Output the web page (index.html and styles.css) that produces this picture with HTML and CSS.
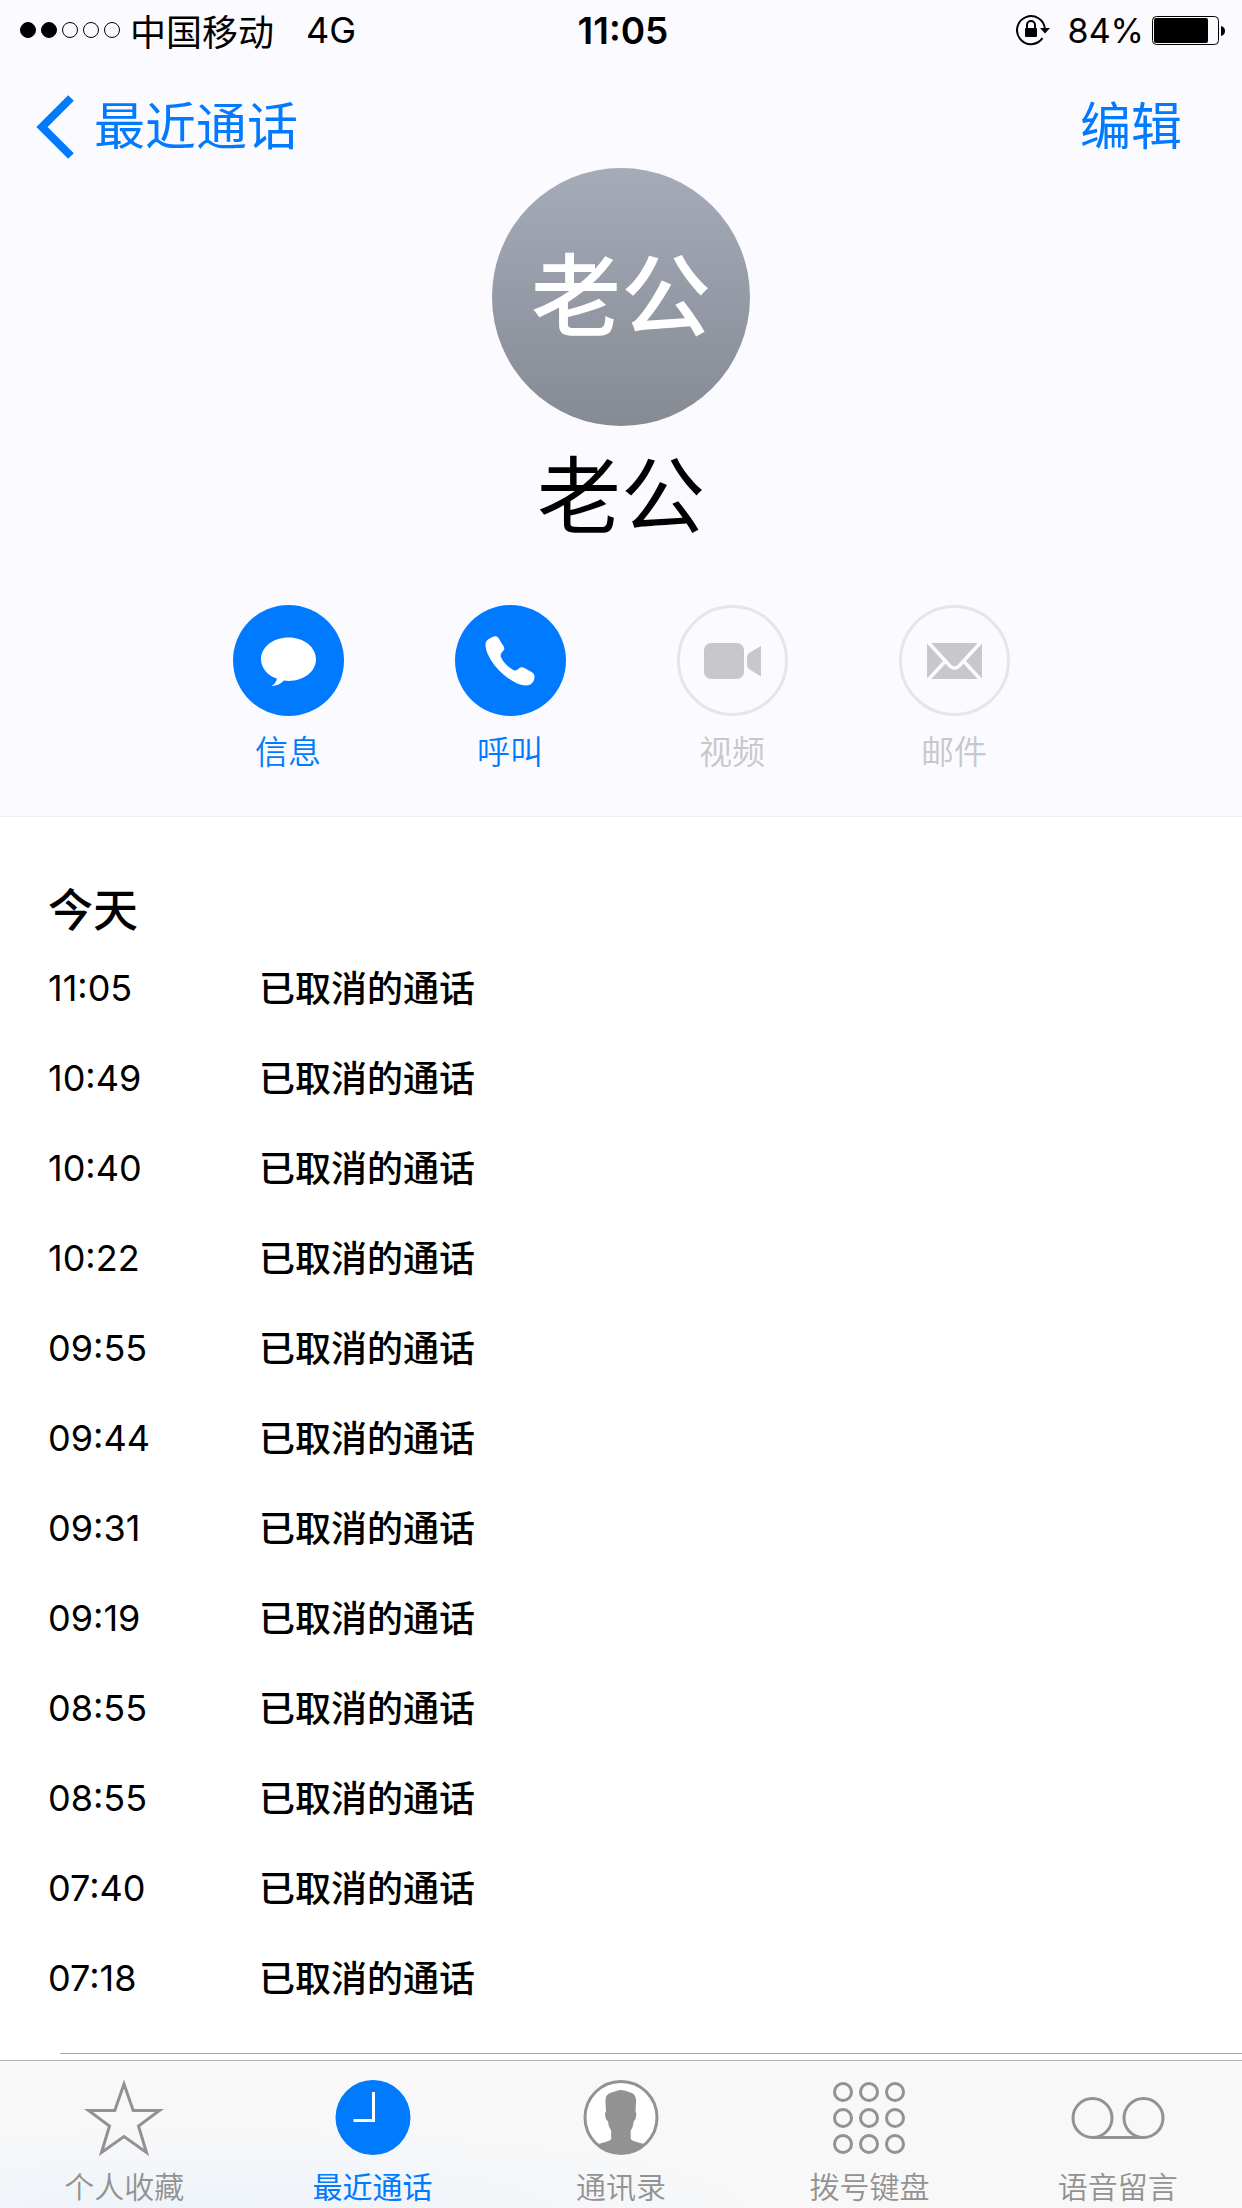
FILE: index.html
```html
<!doctype html>
<html lang="zh-CN">
    <head>
        <meta charset="UTF-8" />
        <meta name="viewport" content="width=device-width, initial-scale=1.0" />
        <title>最近通话</title>
        <link rel="stylesheet" href="styles.css">
    </head>
    <body>
        <header class="header">
            <div class="status-bar">
                <div class="status-left">
                    <div class="signal">
                        <span class="dot full"></span>
                        <span class="dot full"></span>
                        <span class="dot"></span>
                        <span class="dot"></span>
                        <span class="dot"></span>
                    </div>
                    <span>中国移动</span>
                    <span class="network">4G</span>
                </div>
                <div class="status-time">11:05</div>
                <div class="status-right">
                    <svg class="lock" width="34" height="32" viewBox="0 0 34 32">
                        <path d="M26.500 24.200A14 14 0 1 1 29 15" fill="none" stroke="#000" stroke-width="2" />
                        <path d="M24 14h10l-5 5.500z" />
                        <rect x="9" y="14" width="12" height="9" rx="1" />
                        <path d="M11 14v-3a4 4 0 0 1 8 0v3" fill="none" stroke="#000" stroke-width="2" />
                    </svg>
                    <span class="percent">84%</span>
                    <svg class="battery" width="74" height="29" viewBox="0 0 74 29">
                        <rect x="0.500" y="0.500" width="66" height="28" rx="4" fill="none" stroke="#000" />
                        <rect x="2" y="2" width="54" height="25" rx="2" />
                        <path d="M69 10q4 1 4 5t-4 5z" />
                    </svg>
                </div>
            </div>

            <nav class="nav-bar">
                <a class="back" href="#">
                    <svg width="40" height="64" viewBox="0 0 40 64">
                        <path d="M35 3L6 32L35 61" fill="none" stroke="#007aff" stroke-width="8" />
                    </svg>
                    <span>最近通话</span>
                </a>
                <button class="edit" type="button">编辑</button>
            </nav>

            <div class="avatar">老公</div>
            <h1>老公</h1>

            <div class="actions">
                <button class="action" type="button">
                    <svg width="111" height="111" viewBox="0 0 111 111">
                        <circle cx="55.500" cy="55.500" r="55.500" fill="#007aff" />
                        <path d="M55.500 32.500c15.500 0 27.500 9.700 27.500 21.800S71 76 55.500 76q-2.200 0-4.500-.4c-3.500 3.600-7.500 5.600-12.500 5.400 3-1.500 5-4.200 5.300-7.400C34.500 70.500 28 63 28 54.300c0-12.100 12-21.800 27.500-21.800z" fill="#fff" />
                    </svg>
                    <span>信息</span>
                </button>
                <button class="action" type="button">
                    <svg width="111" height="111" viewBox="0 0 111 111">
                        <circle cx="55.500" cy="55.500" r="55.500" fill="#007aff" />
                        <path d="M37 32.200c2.500-1.500 5-1.500 6.500.8l5.200 8.500c1 1.800.8 3-.6 4.500-2.200 2.300-3 4.300-2 6.500 2.500 5.200 7.500 10 12.200 12.600 1.600.8 3 .3 4.600-.9 2.500-2 4.300-2.500 6.600-1.200l7 4c2.300 1.400 3.200 3 3 5.500-.4 4.500-3.500 8-8.500 8-16 0-41-25.500-40.500-41.500.1-3.200 3-5 6.500-6.800z" fill="#fff" />
                    </svg>
                    <span>呼叫</span>
                </button>
                <button class="action" type="button" disabled>
                    <svg width="111" height="111" viewBox="0 0 111 111">
                        <circle cx="55.500" cy="55.500" r="54" fill="none" stroke="#e5e5ea" stroke-width="3" />
                        <rect x="27" y="38" width="40" height="36" rx="7" fill="#c7c7cc" />
                        <path d="M84 41v30.500L72 64q-2-1.500-2-4v-8q0-2.500 2-4z" fill="#c7c7cc" />
                    </svg>
                    <span>视频</span>
                </button>
                <button class="action" type="button" disabled>
                    <svg width="111" height="111" viewBox="0 0 111 111">
                        <circle cx="55.500" cy="55.500" r="54" fill="none" stroke="#e5e5ea" stroke-width="3" />
                        <rect x="28" y="38" width="55" height="36" fill="#c7c7cc" />
                        <path d="M28 36L51 61q4.500 4.500 9 0L83 36M28 76L46.500 56M83 76L64.500 56" fill="none" stroke="#fbfaff" stroke-width="3.500" />
                    </svg>
                    <span>邮件</span>
                </button>
            </div>
        </header>

        <main class="history">
            <h2>今天</h2>
            <table class="calls">
                <tbody>
                    <tr><td class="time">11:05</td><td class="type">已取消的通话</td></tr>
                    <tr><td class="time">10:49</td><td class="type">已取消的通话</td></tr>
                    <tr><td class="time">10:40</td><td class="type">已取消的通话</td></tr>
                    <tr><td class="time">10:22</td><td class="type">已取消的通话</td></tr>
                    <tr><td class="time">09:55</td><td class="type">已取消的通话</td></tr>
                    <tr><td class="time">09:44</td><td class="type">已取消的通话</td></tr>
                    <tr><td class="time">09:31</td><td class="type">已取消的通话</td></tr>
                    <tr><td class="time">09:19</td><td class="type">已取消的通话</td></tr>
                    <tr><td class="time">08:55</td><td class="type">已取消的通话</td></tr>
                    <tr><td class="time">08:55</td><td class="type">已取消的通话</td></tr>
                    <tr><td class="time">07:40</td><td class="type">已取消的通话</td></tr>
                    <tr><td class="time">07:18</td><td class="type">已取消的通话</td></tr>
                </tbody>
            </table>
            <hr class="separator">
        </main>

        <nav class="tab-bar">
            <a class="tab" href="#">
                <svg width="80" height="78" viewBox="0 0 80 78">
                    <path d="M40 5L49.200 31.500H75.500L54.500 47L62.500 73.500L40 57.500L17.500 73.500L25.500 47L4.500 31.500H30.800Z" fill="none" stroke="#929292" stroke-width="3" />
                </svg>
                <span>个人收藏</span>
            </a>
            <a class="tab active" href="#">
                <svg width="80" height="78" viewBox="0 0 80 78">
                    <circle cx="40" cy="38.500" r="37.500" fill="#007aff" />
                    <path d="M40.500 13V41.500H20.500" fill="none" stroke="#fff" stroke-width="3" />
                </svg>
                <span>最近通话</span>
            </a>
            <a class="tab" href="#">
                <svg width="80" height="78" viewBox="0 0 80 78">
                    <circle cx="40" cy="38.500" r="36" fill="#fff" stroke="#929292" stroke-width="3" />
                    <path d="M40.500 11c4 .2 5.500 1.800 9 2.500 4.500 1.500 6 5 5.500 10l-.5 9.500c1.200.5.900 2.200.5 4.500-.4 2.500-1 4-2.300 4.800-.4 4-1.200 6.700-3 9.200v8.500c1.500 2.500 9 3.500 15 5.500a37.500 37.500 0 0 1-49 0c6-2 13-3 14.500-5.500v-8.500c-1.800-2.500-2.800-5.200-3.200-9.200-1.500-.8-2.200-2.300-2.600-4.800-.4-2.300-.6-4 .6-4.500l-.5-9.500c-.3-6 1.500-8.500 6-10 3.500-.8 6-2.500 10-2.500z" fill="#929292" />
                </svg>
                <span>通讯录</span>
            </a>
            <a class="tab" href="#">
                <svg width="80" height="78" viewBox="0 0 80 78">
                    <g fill="none" stroke="#929292" stroke-width="3">
                        <circle cx="14" cy="13" r="8.500" />
                        <circle cx="40" cy="13" r="8.500" />
                        <circle cx="66" cy="13" r="8.500" />
                        <circle cx="14" cy="39" r="8.500" />
                        <circle cx="40" cy="39" r="8.500" />
                        <circle cx="66" cy="39" r="8.500" />
                        <circle cx="14" cy="65" r="8.500" />
                        <circle cx="40" cy="65" r="8.500" />
                        <circle cx="66" cy="65" r="8.500" />
                    </g>
                </svg>
                <span>拨号键盘</span>
            </a>
            <a class="tab" href="#">
                <svg width="96" height="78" viewBox="0 0 96 78">
                    <g fill="none" stroke="#929292" stroke-width="3">
                        <circle cx="22.500" cy="39" r="19.500" />
                        <circle cx="73.500" cy="39" r="19.500" />
                        <path d="M22.500 58.500H73.500" />
                    </g>
                </svg>
                <span>语音留言</span>
            </a>
        </nav>
    </body>
</html>
```

FILE: styles.css
```css
* {
    margin: 0;
    padding: 0;
    box-sizing: border-box;
}

body {
    display: flex;
    flex-direction: column;
    min-height: 100vh;
    font-family: Inter, "Noto Sans CJK SC", sans-serif;
    font-size: 36px;
    color: #000;
    background: #fff;
}

a {
    color: inherit;
    text-decoration: none;
}

button {
    font: inherit;
    color: inherit;
    background: none;
    border: none;
    cursor: pointer;
}

svg {
    display: block;
}

.header {
    background: #fbfaff;
    border-bottom: 1px solid #efeff2;
    padding-bottom: 44px;
}

/* Status bar */
.status-bar {
    display: grid;
    grid-template-columns: 1fr auto 1fr;
    align-items: center;
    height: 60px;
    padding: 0 16px 0 20px;
}

.status-left,
.status-right {
    display: flex;
    align-items: center;
}

.status-right {
    justify-content: flex-end;
}

.signal {
    display: flex;
    gap: 5px;
    margin-right: 10px;
}

.dot {
    width: 16px;
    height: 16px;
    border: 1px solid #000;
    border-radius: 50%;
}

.dot.full {
    background: #000;
}

.network {
    margin-left: 32px;
}

.status-time {
    font-size: 37px;
    font-weight: 600;
}

.percent {
    font-size: 34px;
}

.lock {
    margin-right: 18px;
}

.battery {
    margin-left: 8px;
}

/* Navigation */
.nav-bar {
    display: flex;
    align-items: center;
    justify-content: space-between;
    height: 108px;
    padding: 26px 60px 0 36px;
    font-size: 51px;
    line-height: 60px;
    color: #007aff;
}

.back {
    display: flex;
    align-items: center;
    gap: 18px;
}

/* Contact */
.avatar {
    display: flex;
    align-items: center;
    justify-content: center;
    width: 258px;
    height: 258px;
    margin: 0 auto;
    padding-bottom: 14px;
    border-radius: 50%;
    background: linear-gradient(#a5abb9, #858a93);
    color: #fff;
    font-size: 90px;
    font-weight: 500;
}

h1 {
    margin-top: 23px;
    font-size: 84px;
    font-weight: 400;
    line-height: 96px;
    text-align: center;
}

.actions {
    display: flex;
    justify-content: center;
    gap: 111px;
    margin-top: 60px;
}

.action {
    display: flex;
    flex-direction: column;
    align-items: center;
    gap: 16px;
    color: #007aff;
    font-size: 33px;
    font-weight: 350;
    line-height: 40px;
}

.action:disabled {
    color: #c7c7cc;
    cursor: default;
}

/* Call history */
.history {
    flex: 1;
    padding-top: 61px;
}

h2 {
    padding-left: 48px;
    font-size: 45px;
    font-weight: 500;
    line-height: 65px;
}

.calls {
    border-collapse: collapse;
}

.calls td {
    height: 90px;
    vertical-align: middle;
}

.calls .time {
    width: 259px;
    padding-left: 48px;
}

.calls .type {
    padding-bottom: 4px;
    font-weight: 500;
}

.separator {
    height: 1px;
    margin: 30px 0 0 60px;
    border: none;
    background: #a9a9ac;
}

/* Tab bar */
.tab-bar {
    display: grid;
    grid-template-columns: repeat(5, 1fr);
    height: 148px;
    padding-top: 18px;
    border-top: 1px solid #b2b2b2;
    background: radial-gradient(ellipse at 16% 100%, #eef4fb, #f8f8f8 40%);
    color: #929292;
    font-size: 30px;
    font-weight: 350;
    line-height: 40px;
}

.tab {
    display: flex;
    flex-direction: column;
    align-items: center;
    gap: 10px;
}

.tab.active {
    color: #007aff;
    font-weight: 400;
}
```
